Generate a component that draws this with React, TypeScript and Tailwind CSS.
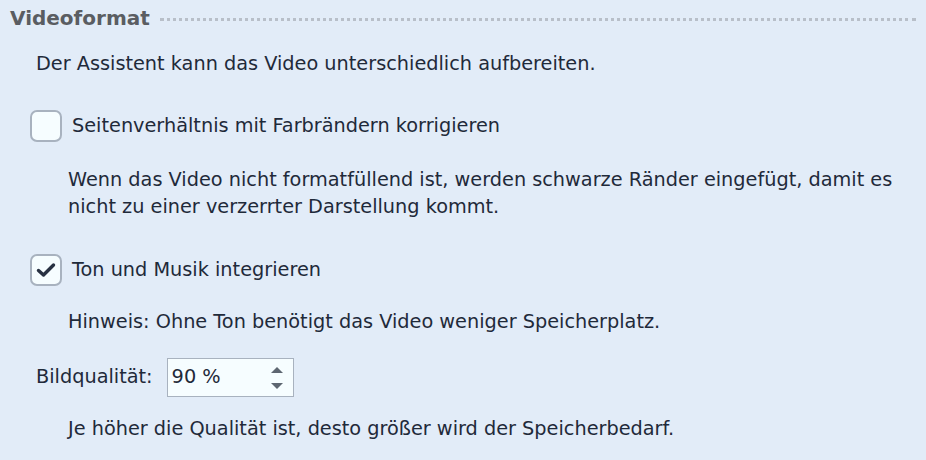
import { useState } from "react";

function Check({ checked, onToggle }: { checked: boolean; onToggle: () => void }) {
  return (
    <button
      onClick={onToggle}
      className="w-[32px] h-[32px] shrink-0 rounded-[7px] border-2 border-[#a8b2bf] bg-[#f6fdff] flex items-center justify-center"
    >
      {checked && (
        <svg width="20" height="16" viewBox="0 0 20 16">
          <path d="M2.5 8.5 L7.5 13 L17.5 3" fill="none" stroke="#273142" strokeWidth="3.4" strokeLinecap="round" strokeLinejoin="round" />
        </svg>
      )}
    </button>
  );
}

export default function App() {
  const [aspect, setAspect] = useState(false);
  const [audio, setAudio] = useState(true);
  const [quality, setQuality] = useState(90);

  return (
    <div
      className="w-[926px] h-[460px] bg-[#e2ecf8] text-[#1f2a3a] text-[19.3px] overflow-hidden"
      style={{ fontFamily: '"DejaVu Sans", Verdana, sans-serif' }}
    >
      <div className="flex items-center pl-[10px] pr-[10px] h-[36px]">
        <span className="font-bold text-[20px] text-[#5a5d62]">Videoformat</span>
        <div className="flex-1 ml-[10px] mt-[3px] border-t-[3px] border-dotted border-[#b8bfc9]" />
      </div>

      <div className="pl-[36px] pt-[14px]">
        <p className="leading-[27px]">Der Assistent kann das Video unterschiedlich aufbereiten.</p>

        <div className="flex items-center gap-[10px] -ml-[6px] mt-[33px]">
          <Check checked={aspect} onToggle={() => setAspect(!aspect)} />
          <span>Seitenverhältnis mit Farbrändern korrigieren</span>
        </div>
        <p className="ml-[32px] mt-[24px] leading-[27px] w-[845px]">
          Wenn das Video nicht formatfüllend ist, werden schwarze Ränder eingefügt, damit es nicht zu einer verzerrter Darstellung kommt.
        </p>

        <div className="flex items-center gap-[10px] -ml-[6px] mt-[34px]">
          <Check checked={audio} onToggle={() => setAudio(!audio)} />
          <span>Ton und Musik integrieren</span>
        </div>
        <p className="ml-[32px] mt-[22px] leading-[27px]">
          Hinweis: Ohne Ton benötigt das Video weniger Speicherplatz.
        </p>

        <div className="flex items-center mt-[23px]">
          <span>Bildqualität:</span>
          <div className="ml-[14px] w-[127px] h-[39px] border border-[#a8b2bf] bg-[#f6fdff] flex items-center pl-[4px] pr-[10px]">
            <span className="flex-1">{quality} %</span>
            <div className="flex flex-col gap-[10px]">
              <button onClick={() => setQuality(Math.min(100, quality + 5))} className="w-0 h-0 border-l-[6px] border-r-[6px] border-b-[6px] border-l-transparent border-r-transparent border-b-[#5d6671]" />
              <button onClick={() => setQuality(Math.max(5, quality - 5))} className="w-0 h-0 border-l-[6px] border-r-[6px] border-t-[6px] border-l-transparent border-r-transparent border-t-[#5d6671]" />
            </div>
          </div>
        </div>
        <p className="ml-[32px] mt-[18px] leading-[27px]">
          Je höher die Qualität ist, desto größer wird der Speicherbedarf.
        </p>
      </div>
    </div>
  );
}
